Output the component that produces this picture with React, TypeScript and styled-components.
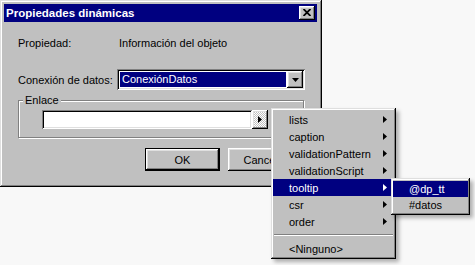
import styled, { createGlobalStyle, css } from "styled-components";

const GlobalStyle = createGlobalStyle`
  body {
    margin: 0;
    background: #f8f8f8;
    font-family: "Liberation Sans", Arial, sans-serif;
    font-size: 11px;
    color: #000;
  }
`;

const raised = css`
  box-shadow: inset -1px -1px #000, inset 1px 1px #fff, inset -2px -2px #808080,
    inset 2px 2px #dfdfdf;
`;

const sunken = css`
  box-shadow: inset 1px 1px #808080, inset -1px -1px #fff, inset 2px 2px #000,
    inset -2px -2px #dfdfdf;
`;

const Desktop = styled.div`
  position: relative;
  width: 475px;
  height: 265px;
  overflow: hidden;
`;

const Window = styled.div`
  position: absolute;
  left: 0;
  top: 0;
  width: 322px;
  height: 187px;
  box-sizing: border-box;
  padding: 4px 5px 0 4px;
  background: #c0c0c0;
  box-shadow: inset -1px -1px #000, inset 1px 1px #dfdfdf, inset -2px -2px #808080,
    inset 2px 2px #fff;
  display: flex;
  flex-direction: column;
`;

const TitleBar = styled.div`
  height: 18px;
  background: #000080;
  color: #fff;
  font-weight: bold;
  font-size: 11.5px;
  display: flex;
  align-items: center;
  justify-content: space-between;
  padding: 0 2px;
`;

const CloseButton = styled.div`
  width: 16px;
  height: 14px;
  background: #c0c0c0;
  ${raised}
  display: grid;
  place-items: center;
  padding-bottom: 1px;
  box-sizing: border-box;
`;

const Body = styled.div`
  display: flex;
  flex-direction: column;
  padding: 0 12px 0 14px;
`;

const Row = styled.div<{ $top: number; $height: number }>`
  display: grid;
  grid-template-columns: 99px 1fr;
  align-items: center;
  margin-top: ${({ $top }) => $top}px;
  height: ${({ $height }) => $height}px;
`;

const Value = styled.span`
  padding-left: 2px;
`;

const Select = styled.div`
  height: 21px;
  box-sizing: border-box;
  ${sunken}
  background: #fff;
  padding: 2px;
  display: flex;
`;

const Selected = styled.div`
  flex: 1;
  margin: 1px;
  background: #000080;
  color: #fff;
  padding-left: 2px;
  line-height: 15px;
`;

const DropButton = styled.div`
  width: 16px;
  height: 17px;
  background: #c0c0c0;
  ${raised}
  display: grid;
  place-items: center;
`;

const Group = styled.fieldset`
  margin: 4px 1px 0 0;
  padding: 0;
  min-width: 0;
  border: 1px solid #808080;
  box-shadow: inset 1px 1px #fff, 1px 1px #fff;
`;

const Legend = styled.legend`
  margin-left: 4px;
  padding: 0 2px;
  line-height: 13px;
  background: #c0c0c0;
`;

const InputRow = styled.div`
  display: flex;
  margin: 3px 0 8px 23px;
`;

const TextInput = styled.div`
  width: 210px;
  height: 19px;
  background: #fff;
  ${sunken}
`;

const LinkButton = styled.div`
  width: 16px;
  height: 19px;
  background-color: #dfdfdf;
  background-image: repeating-conic-gradient(#fff 0 25%, #c0c0c0 0 50%);
  background-size: 2px 2px;
  ${raised}
  display: grid;
  place-items: center;
`;

const ButtonRow = styled.div`
  display: flex;
  justify-content: flex-end;
  gap: 8px;
  margin-top: 10px;
  padding-right: 2px;
`;

const PushButton = styled.div<{ $default?: boolean }>`
  width: 75px;
  height: 23px;
  box-sizing: border-box;
  background: #c0c0c0;
  display: grid;
  place-items: center;
  ${({ $default }) =>
    $default
      ? css`
          border: 1px solid #000;
          ${raised}
        `
      : raised}
`;

const Menu = styled.div<{ $left: number; $top: number; $width: number }>`
  position: absolute;
  left: ${({ $left }) => $left}px;
  top: ${({ $top }) => $top}px;
  width: ${({ $width }) => $width}px;
  box-sizing: border-box;
  padding: 3px 2px 2px;
  background: #c0c0c0;
  box-shadow: inset -1px -1px #000, inset 1px 1px #dfdfdf, inset -2px -2px #808080,
    inset 2px 2px #fff, 3px 3px 4px rgba(0, 0, 0, 0.3);
`;

const MenuItem = styled.div<{ $active?: boolean; $height?: number }>`
  height: ${({ $height = 17 }) => $height}px;
  display: flex;
  align-items: center;
  justify-content: space-between;
  padding: 0 7px 0 16px;
  background: ${({ $active }) => ($active ? "#000080" : "transparent")};
  color: ${({ $active }) => ($active ? "#fff" : "#000")};
`;

const Separator = styled.div`
  margin: 4px 1px;
  border-top: 1px solid #808080;
  border-bottom: 1px solid #fff;
`;

const RightArrow = () => (
  <svg width="4" height="7" viewBox="0 0 4 7">
    <polygon points="0,0 4,3.5 0,7" fill="currentColor" />
  </svg>
);

const DownArrow = () => (
  <svg width="7" height="4" viewBox="0 0 7 4">
    <polygon points="0,0 7,0 3.5,4" fill="#000" />
  </svg>
);

const CloseGlyph = () => (
  <svg width="8" height="7" viewBox="0 0 8 7">
    <path d="M0.5 0 L7.5 7 M7.5 0 L0.5 7" stroke="#000" strokeWidth="1.8" />
  </svg>
);

const fields = [
  "lists",
  "caption",
  "validationPattern",
  "validationScript",
  "tooltip",
  "csr",
  "order",
];

export default function App() {
  return (
    <Desktop>
      <GlobalStyle />
      <Window>
        <TitleBar>
          <span>Propiedades dinámicas</span>
          <CloseButton>
            <CloseGlyph />
          </CloseButton>
        </TitleBar>
        <Body>
          <Row $top={14} $height={14}>
            <span>Propiedad:</span>
            <Value>Información del objeto</Value>
          </Row>
          <Row $top={19} $height={21}>
            <span>Conexión de datos:</span>
            <Select>
              <Selected>ConexiónDatos</Selected>
              <DropButton>
                <DownArrow />
              </DropButton>
            </Select>
          </Row>
          <Group>
            <Legend>Enlace</Legend>
            <InputRow>
              <TextInput />
              <LinkButton>
                <RightArrow />
              </LinkButton>
            </InputRow>
          </Group>
          <ButtonRow>
            <PushButton $default>OK</PushButton>
            <PushButton>Cancelar</PushButton>
          </ButtonRow>
        </Body>
      </Window>
      <Menu $left={271} $top={108} $width={125}>
        {fields.map((f) => (
          <MenuItem key={f} $active={f === "tooltip"}>
            <span>{f}</span>
            <RightArrow />
          </MenuItem>
        ))}
        <Separator />
        <MenuItem>&lt;Ninguno&gt;</MenuItem>
      </Menu>
      <Menu $left={391} $top={178} $width={79}>
        <MenuItem $active $height={16}>
          @dp_tt
        </MenuItem>
        <MenuItem $height={16}>#datos</MenuItem>
      </Menu>
    </Desktop>
  );
}
